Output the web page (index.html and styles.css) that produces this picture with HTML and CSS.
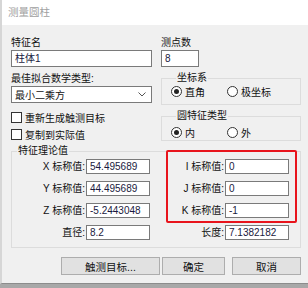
FILE: index.html
```html
<!DOCTYPE html>
<html lang="zh-CN">
<head>
    <meta charset="UTF-8">
    <title>测量圆柱</title>
    <link rel="stylesheet" href="styles.css">
</head>
<body>
    <div class="window">
        <div class="titlebar">测量圆柱</div>
        <div class="content">
            <div class="top">
                <div class="col-left">
                    <div class="label">特征名</div>
                    <div class="input">柱体1</div>
                    <div class="label gap">最佳拟合数学类型:</div>
                    <div class="select">
                        <span>最小二乘方</span>
                        <svg width="8" height="5" viewBox="0 0 8 5"><path d="M0.5 0.5 L4 4 L7.5 0.5" fill="none" stroke="#555" stroke-width="1"/></svg>
                    </div>
                    <div class="check first"><span class="box"></span>重新生成触测目标</div>
                    <div class="check"><span class="box"></span>复制到实际值</div>
                </div>
                <div class="col-right">
                    <div class="label">测点数</div>
                    <div class="input small">8</div>
                    <fieldset class="group coords">
                        <legend>坐标系</legend>
                        <div class="radios">
                            <div class="radio-item"><span class="radio on"></span>直角</div>
                            <div class="radio-item"><span class="radio"></span>极坐标</div>
                        </div>
                    </fieldset>
                    <fieldset class="group circle">
                        <legend>圆特征类型</legend>
                        <div class="radios">
                            <div class="radio-item"><span class="radio on"></span>内</div>
                            <div class="radio-item"><span class="radio"></span>外</div>
                        </div>
                    </fieldset>
                </div>
            </div>

            <fieldset class="group values">
                <legend>特征理论值</legend>
                <div class="value-grid">
                    <div class="vlabel">X 标称值:</div><div class="input">54.495689</div>
                    <div class="vlabel">I 标称值:</div><div class="input">0</div>
                    <div class="vlabel">Y 标称值:</div><div class="input">44.495689</div>
                    <div class="vlabel">J 标称值:</div><div class="input">0</div>
                    <div class="vlabel">Z 标称值:</div><div class="input">-5.2443048</div>
                    <div class="vlabel">K 标称值:</div><div class="input">-1</div>
                    <div class="vlabel">直径:</div><div class="input">8.2</div>
                    <div class="vlabel">长度:</div><div class="input">7.1382182</div>
                    <div class="highlight"></div>
                </div>
            </fieldset>

            <div class="buttons">
                <button class="btn probe">触测目标...</button>
                <button class="btn ok">确定</button>
                <button class="btn cancel">取消</button>
            </div>
        </div>
    </div>
</body>
</html>
```

FILE: styles.css
```css
body {
    margin: 0;
    background: #a8a8a8;
    font-family: "Liberation Sans", "Noto Sans CJK SC", sans-serif;
    font-size: 10px;
    color: #111;
}

.window {
    width: 306px;
    height: 283px;
    border-left: 2px solid #d6d6d6;
    background: #f0f0f0;
    border-bottom: 1px solid #8c8c8c;
}

.titlebar {
    height: 25px;
    line-height: 25px;
    padding-left: 6px;
    background: #fff;
    color: #a0a0a0;
    font-size: 10.5px;
}

.content {
    padding: 10px 7px 0 9px;
}

.top {
    display: flex;
    gap: 9px;
}

.col-left {
    width: 141px;
}

.col-right {
    flex: 1;
}

.label {
    height: 15px;
    line-height: 15px;
}

.label.gap {
    margin-top: 4px;
}

.input {
    box-sizing: border-box;
    height: 17px;
    line-height: 15px;
    padding-left: 3px;
    background: #fff;
    border: 1px solid #7a7a7a;
    color: #1a1a40;
    white-space: nowrap;
    overflow: hidden;
}

.input.small {
    width: 38px;
}

.select {
    box-sizing: border-box;
    height: 17px;
    display: flex;
    align-items: center;
    justify-content: space-between;
    padding: 0 5px 0 3px;
    background: #fff;
    border: 1px solid #7a7a7a;
}

.check {
    display: flex;
    align-items: center;
    height: 17px;
}

.check.first {
    margin-top: 6px;
}

.box {
    box-sizing: border-box;
    width: 11px;
    height: 11px;
    margin-right: 3px;
    border: 1px solid #333;
    background: #fff;
}

.group {
    margin: 0;
    padding: 0 9px;
    border: 1px solid #dcdcdc;
    min-width: 0;
}

.group legend {
    margin-left: 5px;
    padding: 0 1px;
    height: 14px;
    line-height: 14px;
}

.coords {
    margin-top: 4px;
}

.coords .radios {
    margin: 0 0 6px;
}

.circle {
    margin-top: 4px;
}

.circle .radios {
    margin: 3px 0 1px;
}

.radios {
    display: flex;
    height: 13px;
}

.radio-item {
    display: flex;
    align-items: center;
    width: 56px;
}

.radio {
    box-sizing: border-box;
    width: 11px;
    height: 11px;
    margin-right: 3px;
    border: 1px solid #333;
    border-radius: 50%;
    background: #fff;
    position: relative;
}

.radio.on::after {
    content: "";
    position: absolute;
    left: 2px;
    top: 2px;
    width: 5px;
    height: 5px;
    border-radius: 50%;
    background: #222;
}

.values {
    margin-top: 1px;
    padding: 1px 0 7px;
}

.value-grid {
    position: relative;
    display: grid;
    grid-template-columns: 74px 64px 75px 64px;
    row-gap: 7px;
}

.value-grid .input {
    height: 15px;
    line-height: 13px;
}

.vlabel {
    text-align: right;
    padding-right: 1px;
    line-height: 15px;
    white-space: nowrap;
}

.highlight {
    position: absolute;
    left: 154px;
    top: -9px;
    width: 131px;
    height: 73px;
    box-sizing: border-box;
    border: 2px solid #e8141c;
    border-radius: 2px;
}

.buttons {
    display: flex;
    justify-content: flex-end;
    margin-top: 9px;
}

.btn {
    box-sizing: border-box;
    height: 18px;
    padding: 0;
    background: #e1e1e1;
    border: 1px solid #adadad;
    font-family: inherit;
    font-size: 10.5px;
    color: #111;
}

.btn.probe {
    width: 99px;
}

.btn.ok {
    width: 63px;
    margin-left: 2px;
}

.btn.cancel {
    width: 69px;
    margin-left: 7px;
}
```
